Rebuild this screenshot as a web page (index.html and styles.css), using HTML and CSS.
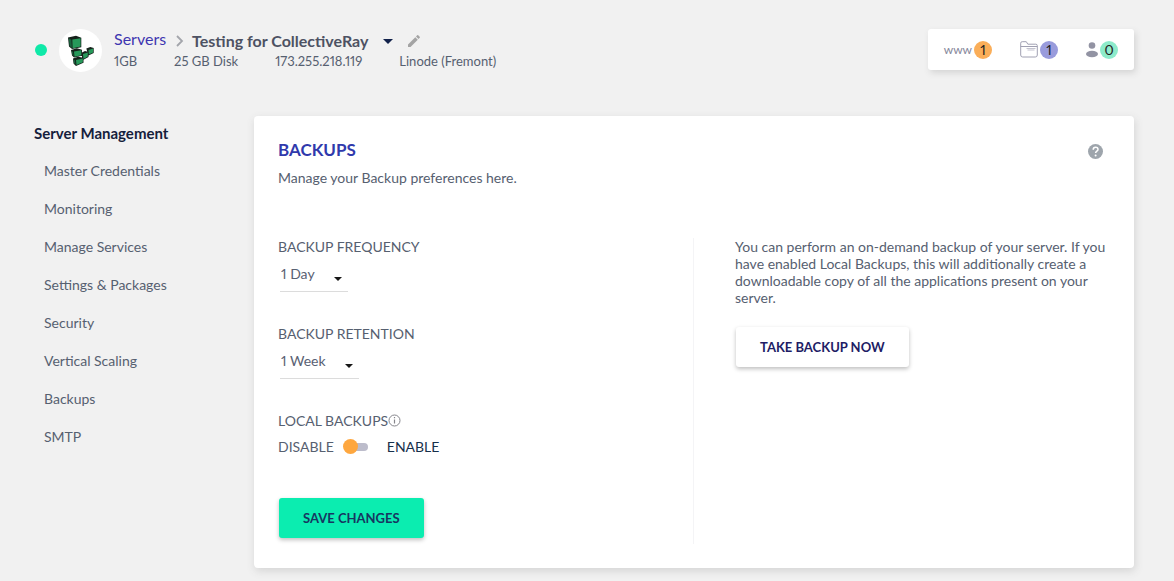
FILE: index.html
```html
<!DOCTYPE html>
<html lang="en">
<head>
<meta charset="utf-8">
<meta name="viewport" content="width=device-width, initial-scale=1">
<title>Server Management - Backups</title>
<link rel="stylesheet" href="styles.css">
</head>
<body>
<header class="topbar">
  <span class="status-dot"></span>
  <span class="provider">
    <svg width="27" height="32" viewBox="0 0 27 32" aria-hidden="true">
      <path fill="#16211b" d="M1 2.500 9 .700l5.300 2v9.500L5 14 2 11.500zM4 15l6-1.700 5 1.500v6L7 22.500l-2-2zM6 23.500l5-1.700 5.500 1v5L9 31l-2.500-2.500zM14 18l4-2 3.500 1v5L16 25zM19.300 13.500l4-1.500 3.400 1v5l-5.200 2.500z"/>
      <path fill="#27995a" d="M5.300 4.500l8.300-1.300v8.300l-8 1.700zM7 16.500l7.300-1.300v5l-6.800 1.600zM9 25l6.800-1.500v3.800L9.500 30zM16 19l4.800-1.500v4L16.500 24zM21.500 15l4.600-1.400v4l-4.300 2z"/>
      <path fill="#19633d" d="M1.700 3.300l2.700 1.500.5 8-2.300-1.900zM4.600 15.700l1.500 1.200.6 4.400-1.200-1.200zM6.600 24.200l1.500 1.200.4 4.200-1.400-1.400z"/>
    </svg>
  </span>
  <div class="server">
    <div class="crumbs">
      <a class="crumb-link" href="#">Servers</a>
      <svg class="chevron" width="8" height="12" viewBox="0 0 8 12" aria-hidden="true"><path d="M1 1l5 5-5 5" fill="none" stroke="#a3a5ab" stroke-width="1.8"/></svg>
      <h1 class="server-name">Testing for CollectiveRay</h1>
      <button class="icon-button switcher" type="button" aria-label="Switch server"><svg width="10" height="5" viewBox="0 0 10 5"><path d="M0 0h10L5 5z" fill="#12224b"/></svg></button>
      <button class="icon-button" type="button" aria-label="Rename server"><svg width="12" height="12" viewBox="0 0 12 12"><path d="M0 9.5 7.3 2.2l2.5 2.5L2.5 12H0zM8 1.500 9.200.3q.5-.5 1 0l1.500 1.500q.5.5 0 1L10.500 4z" fill="#a4a4a4"/></svg></button>
    </div>
    <div class="specs">
      <span>1GB</span><span>25 GB Disk</span><span>173.255.218.119</span><span>Linode (Fremont)</span>
    </div>
  </div>
  <div class="counters">
    <a class="counter" href="#"><span class="www">www</span><span class="badge badge-orange">1</span></a>
    <a class="counter" href="#" aria-label="Projects"><svg width="18" height="17" viewBox="0 0 18 17"><path d="M.7 14V2.200Q.7.700 2.200.700h4.100l1.500 2.500h8q1.500 0 1.500 1.500V14q0 2-2 2H2.700q-2 0-2-2zM.7 5.500h16.600" fill="none" stroke="#a0a0b2"/><path d="M6.500 7.500h9M7.500 9h7" fill="none" stroke="#c4c4d0"/></svg><span class="badge badge-violet">1</span></a>
    <a class="counter" href="#" aria-label="Team"><svg width="12" height="16" viewBox="0 0 12 16"><circle cx="6" cy="3.500" r="3.300" fill="#9293a3"/><ellipse cx="6" cy="12" rx="6" ry="3.300" fill="#9293a3"/></svg><span class="badge badge-green">0</span></a>
  </div>
</header>
<div class="layout">
  <nav class="sidebar" aria-labelledby="nav-title">
    <h2 class="nav-title" id="nav-title">Server Management</h2>
    <ul class="nav-list">
      <li><a href="#">Master Credentials</a></li>
      <li><a href="#">Monitoring</a></li>
      <li><a href="#">Manage Services</a></li>
      <li><a href="#">Settings &amp; Packages</a></li>
      <li><a href="#">Security</a></li>
      <li><a href="#">Vertical Scaling</a></li>
      <li><a href="#">Backups</a></li>
      <li><a href="#">SMTP</a></li>
    </ul>
  </nav>
  <main class="card">
    <div class="card-head">
      <div>
        <h2 class="card-title">BACKUPS</h2>
        <p class="card-text">Manage your Backup preferences here.</p>
      </div>
      <button class="icon-button help" type="button" aria-label="Help"><svg width="15" height="15" viewBox="0 0 15 15"><circle cx="7.500" cy="7.500" r="7.500" fill="#9ea5ac"/><path d="M5.200 5.700c0-3.200 4.800-3 4.800-.2 0 1.700-2.400 1.700-2.400 3.500" fill="none" stroke="#fff" stroke-width="1.500"/><circle cx="7.600" cy="11.500" r="1" fill="#fff"/></svg></button>
    </div>
    <div class="card-body">
      <form class="settings">
        <div class="field">
          <label for="frequency">BACKUP FREQUENCY</label>
          <div class="select"><select id="frequency"><option>1 Day</option></select></div>
        </div>
        <div class="field">
          <label for="retention">BACKUP RETENTION</label>
          <div class="select select-wide"><select id="retention"><option>1 Week</option></select></div>
        </div>
        <div class="local">
          <div class="local-title"><span id="local-label">LOCAL BACKUPS</span><svg width="13" height="13" viewBox="0 0 13 13" aria-hidden="true"><circle cx="6.500" cy="6.500" r="5.500" fill="none" stroke="#85858b"/><path d="M6.500 5.500v4M6.500 3v1.300" stroke="#85858b" stroke-width="1.200"/></svg></div>
          <label class="toggle"><span>DISABLE</span><input type="checkbox" role="switch" aria-labelledby="local-label"><span class="enable">ENABLE</span></label>
        </div>
        <button class="button button-primary" type="button">SAVE CHANGES</button>
      </form>
      <section class="on-demand">
        <p class="card-text">You can perform an on-demand backup of your server. If you have enabled Local Backups, this will additionally create a downloadable copy of all the applications present on your server.</p>
        <button class="button" type="button">TAKE BACKUP NOW</button>
      </section>
    </div>
  </main>
</div>
</body>
</html>
```
FILE: styles.css
```css
* { box-sizing: border-box; }
body {
  margin: 0;
  background: #f1f1f1;
  color: #566070;
  font: 14px/17px Lato, "Open Sans", sans-serif;
  font-variant-numeric: proportional-nums;
}
h1, h2, p, ul { margin: 0; padding: 0; }
a { color: inherit; text-decoration: none; }
button, select { font: inherit; }
svg { display: block; flex: none; }

.icon-button {
  padding: 0;
  border: 0;
  background: none;
  cursor: pointer;
}

.topbar {
  display: flex;
  align-items: flex-start;
  padding: 29px 40px 0 35px;
}
.status-dot {
  width: 12px;
  height: 12px;
  margin: 15px 12px 0 0;
  border-radius: 50%;
  background: #0fe9a8;
}
.provider {
  display: flex;
  align-items: center;
  justify-content: center;
  width: 43px;
  height: 43px;
  margin-right: 12px;
  border-radius: 50%;
  background: #fff;
}
.crumbs {
  display: flex;
  align-items: center;
  height: 24px;
}
.crumb-link {
  padding-bottom: 6px;
  color: #3e36b0;
  font-size: 16px;
}
.chevron { margin: 0 8px 0 10px; }
.server-name {
  font-size: 16px;
  line-height: 24px;
  font-weight: 700;
  color: #4d5263;
}
.switcher { margin: 0 15px; }
.specs {
  display: flex;
  gap: 37px;
  font-size: 13px;
}
.counters {
  display: flex;
  align-items: center;
  gap: 28px;
  height: 41px;
  margin-left: auto;
  padding: 0 16px;
  border-radius: 3px;
  background: #fff;
  box-shadow: 2px 3px 6px #d5d5d5;
}
.counter {
  display: flex;
  align-items: center;
  gap: 2px;
}
.www {
  color: #85869a;
  font-size: 12px;
}
.badge {
  width: 18px;
  height: 18px;
  border-radius: 50%;
  color: #222;
  line-height: 18px;
  text-align: center;
}
.badge-orange { background: #faae59; }
.badge-violet { background: #999bdc; }
.badge-green { background: #8debca; }

.layout {
  display: grid;
  grid-template-columns: 220px minmax(0, 1fr);
  padding: 44px 40px 13px 34px;
}
.nav-title {
  padding-top: 9px;
  color: #15203c;
  font-size: 15px;
  line-height: 17px;
}
.nav-list {
  display: grid;
  gap: 21px;
  padding: 20px 0 0 10px;
  list-style: none;
}
.nav-list a { display: block; }

.card {
  padding: 24px;
  border-radius: 4px;
  background: #fff;
  box-shadow: 1px 3px 8px #d4d4d4;
}
.card-head {
  display: flex;
  justify-content: space-between;
}
.card-title {
  margin-bottom: 9px;
  color: #3039ac;
  font-size: 17px;
  line-height: 20px;
  font-weight: 700;
}
.help {
  align-self: flex-start;
  margin: 4px 7px 0 0;
}
.card-body {
  display: grid;
  grid-template-columns: 1fr 1fr;
  padding-top: 52px;
}
.settings {
  min-height: 306px;
  border-right: 1px solid #f4f4f6;
}
.field { padding-bottom: 33px; }
.field label { display: block; }
.select {
  display: grid;
  align-items: center;
  width: 70px;
  height: 37px;
  padding-left: 2px;
}
.select-wide { width: 81px; }
.select > select, .select::after { grid-area: 1 / 1; }
.select > select {
  width: 100%;
  height: 37px;
  padding: 1px 2px 0 1px;
  border: 0;
  border-bottom: 1px solid #dcdcdc;
  border-radius: 0;
  background: transparent;
  color: #596173;
  appearance: none;
}
.select::after {
  content: "";
  justify-self: end;
  width: 8px;
  height: 4px;
  margin: 11px 6px 0 0;
  background: #171717;
  clip-path: polygon(0 0, 100% 0, 50% 100%);
  pointer-events: none;
}
.local-title {
  display: flex;
  align-items: center;
}
.toggle {
  display: inline-flex;
  align-items: center;
  gap: 9px;
  padding: 9px 0 43px;
}
.toggle input {
  position: relative;
  display: flex;
  align-items: center;
  width: 26px;
  height: 15px;
  margin: 0;
  appearance: none;
}
.toggle input::after {
  content: "";
  position: absolute;
  inset: 4px 1px 3px;
  border-radius: 4px;
  background: #bcbccb;
}
.toggle input::before {
  content: "";
  z-index: 1;
  width: 15px;
  height: 15px;
  border-radius: 50%;
  background: #fea73f;
}
.toggle input:checked { justify-content: flex-end; }
.enable {
  padding-left: 9px;
  color: #17304b;
}
.button {
  display: block;
  height: 40px;
  margin-left: 1px;
  padding: 0 24px;
  border: 0;
  border-radius: 3px;
  background: #fff;
  box-shadow: 0 2px 4px #bfbfbf;
  color: #211c65;
  font-size: 13px;
  font-weight: 700;
  cursor: pointer;
}
.button-primary {
  background: #0bedb0;
  color: #173661;
}
.on-demand { padding: 0 0 0 41px; }
.on-demand .button { margin-top: 21px; }
```
